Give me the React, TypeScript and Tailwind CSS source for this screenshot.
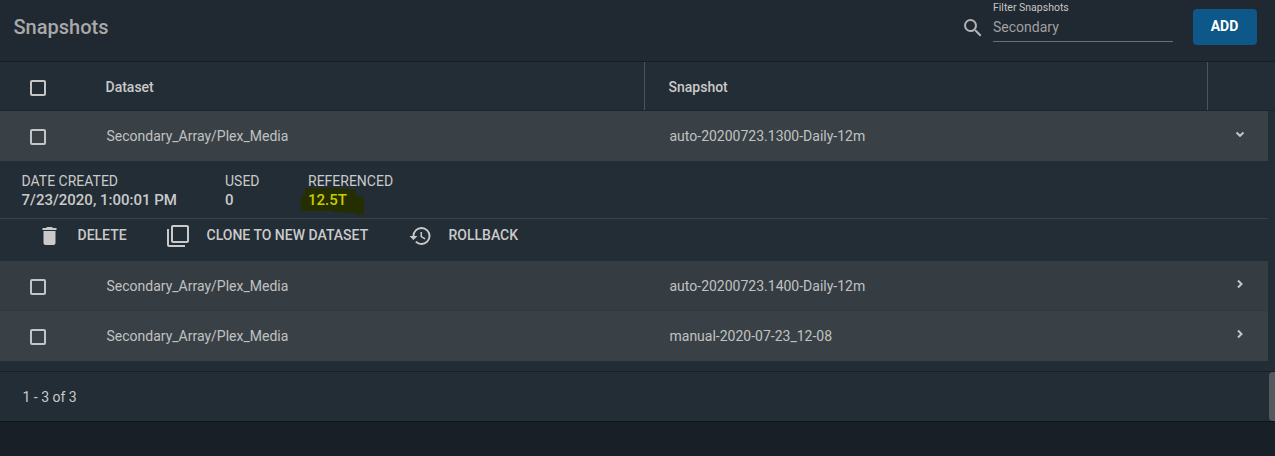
import type { ReactNode } from "react";
import { MdDelete, MdFilterNone, MdHistory, MdSearch } from "react-icons/md";

function Checkbox() {
  return <span role="checkbox" aria-checked="false" className="block size-4 rounded-[2px] border-2 border-[#c3c5c7]" />;
}

function Chevron({ open }: { open?: boolean }) {
  return (
    <svg width="10" height="10" viewBox="0 0 10 10" fill="none" stroke="#c4c6c7" strokeWidth="2">
      <path d={open ? "M1.5 3.5 5 6.8 8.5 3.5" : "M3 1.5 6.5 5 3 8.5"} />
    </svg>
  );
}

function Row({ snapshot, open, tone }: { snapshot: string; open?: boolean; tone: string }) {
  return (
    <div className={`mr-[7px] flex h-[50px] text-[14px] leading-[50px] text-[#c0c1c2] ${tone}`}>
      <div className="w-[106.5px] shrink-0 pt-[18px] pl-[30px]">
        <Checkbox />
      </div>
      <div className="w-[563px] shrink-0">Secondary_Array/Plex_Media</div>
      <div className="flex-1">{snapshot}</div>
      <div className="w-[33px] pt-[18px]">
        <Chevron open={open} />
      </div>
    </div>
  );
}

function Detail({ label, children, width }: { label: string; children: ReactNode; width: string }) {
  return (
    <div className={width}>
      <div className="text-[14px] leading-[18px]">{label}</div>
      <div className="text-[15px] leading-[21px] font-medium">{children}</div>
    </div>
  );
}

function Action({ icon, label, width, gap }: { icon: ReactNode; label: string; width: string; gap: string }) {
  return (
    <div className={`flex shrink-0 ${width} ${gap}`}>
      <span className="mt-[5px]">{icon}</span>
      <span className="text-[14px] leading-[33px] font-medium whitespace-nowrap">{label}</span>
    </div>
  );
}

export default function App() {
  return (
    <div className="h-[456px] w-[1275px] overflow-hidden bg-[#181f27] font-['Roboto',sans-serif] text-[#cacaca]">
      <header className="flex h-[62px] border-b border-[#151d25] bg-[#202831]">
        <h1 className="flex-1 pl-[13.5px] text-[20px] leading-[54px] font-medium text-[#a9a9a9]">Snapshots</h1>
        <MdSearch size={24} className="mt-4 mr-2 text-[#b3b3b3]" />
        <div className="mr-5 h-[42px] w-[180px] border-b border-[#697078]">
          <div className="pt-px text-[10.5px] leading-[13px] text-[#c5c5c5]">Filter Snapshots</div>
          <div className="text-[14px] leading-[26px] text-[#a0a0a0]">Secondary</div>
        </div>
        <button className="mt-[9px] mr-[18px] h-9 w-16 rounded-[4px] bg-[#0d5789] pr-px pb-[2px] text-[14px] leading-[34px] font-bold text-white">
          ADD
        </button>
      </header>

      <main className="h-[309px] bg-[#232d35]">
        <div className="flex h-[49px] border-b border-[#1b242c] text-[14px] leading-[50px] font-medium">
          <div className="w-[105.5px] pt-[18px] pl-[30px]">
            <Checkbox />
          </div>
          <div className="w-[539.5px] border-r border-[#4d555c]">Dataset</div>
          <div className="w-[563px] border-r border-[#4d555c] pl-[23.5px]">Snapshot</div>
        </div>
        <Row snapshot="auto-20200723.1300-Daily-12m" open tone="bg-[#3a4146]" />
        <section className="h-[100px]">
          <div className="mr-[7px] flex h-[58px] border-b border-[#3a4249] pt-[11px] pl-[21.5px]">
            <Detail label="DATE CREATED" width="w-[203.5px]">7/23/2020, 1:00:01 PM</Detail>
            <Detail label="USED" width="w-[83px]">0</Detail>
            <Detail label="REFERENCED" width="w-[120px]">
              <span className="relative block text-[#c9cc00]">
                <svg className="absolute -top-[3px] -left-[7px]" width="63" height="28" viewBox="0 0 63 28" fill="#242e00">
                  <path d="M4 1 38 1 55 3V9L63 10V28H55V26L32 25V24L0 24V9H4Z" />
                </svg>
                <span className="relative">12.5T</span>
              </span>
            </Detail>
          </div>
          <div className="flex pl-[37px]">
            <Action icon={<MdDelete size={24} className="translate-x-[0.5px]" />} label="DELETE" width="w-[129px]" gap="gap-[16.5px]" />
            <Action icon={<MdFilterNone size={24} />} label="CLONE TO NEW DATASET" width="w-[242.5px]" gap="gap-[16.5px]" />
            <Action icon={<MdHistory size={24} className="-translate-x-[0.5px]" />} label="ROLLBACK" width="w-[130px]" gap="gap-4" />
          </div>
        </section>
        <Row snapshot="auto-20200723.1400-Daily-12m" tone="bg-[#363d42] border-b border-[#313a3f]" />
        <Row snapshot="manual-2020-07-23_12-08" tone="bg-[#3a4146]" />
      </main>

      <footer className="flex h-[51px] justify-between border-y border-t-[#171f27] border-b-[#0f151c] bg-[#232d35]">
        <span className="pl-[22.5px] text-[14px] leading-[50px]">1 - 3 of 3</span>
        <span className="h-[49px] w-1.5 rounded-l-[4px] bg-[#55595d]" />
      </footer>
    </div>
  );
}
